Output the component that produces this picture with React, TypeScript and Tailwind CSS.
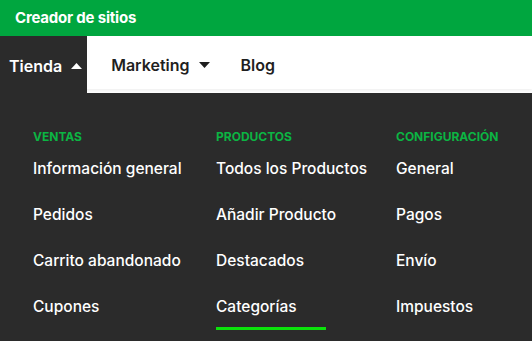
const columns = [
  { title: 'Ventas', items: ['Información general', 'Pedidos', 'Carrito abandonado', 'Cupones'] },
  { title: 'Productos', items: ['Todos los Productos', 'Añadir Producto', 'Destacados', 'Categorías'] },
  { title: 'Configuración', items: ['General', 'Pagos', 'Envío', 'Impuestos'] },
];

const Caret = ({ up }: { up?: boolean }) => (
  <svg width="11" height="6" viewBox="0 0 11 6" className="ml-[9px]">
    <path d={up ? 'M0 6 L5.5 0 L11 6 Z' : 'M0 0 L5.5 6 L11 0 Z'} fill="currentColor" />
  </svg>
);

export default function App() {
  return (
    <div className="flex h-[341px] w-[532px] flex-col overflow-hidden bg-white font-['Inter',sans-serif]">
      <div className="flex h-9 shrink-0 items-center bg-[#00a63f] px-[15px] text-[15px] font-bold tracking-[-0.2px] text-white">
        Creador de sitios
      </div>
      <div className="flex h-[53px] shrink-0 items-start shadow-[0_2px_3px_rgba(0,0,0,0.06)]">
        <button className="flex h-[57px] items-center bg-[#2b2b2b] pl-[9px] pr-[5px] pt-[2px] text-base font-semibold text-white">
          Tienda
          <Caret up />
        </button>
        <button className="ml-[24px] flex h-[55px] items-center pt-[2px] text-base font-semibold text-[#1f1f1f]">
          Marketing
          <Caret />
        </button>
        <button className="ml-[31px] flex h-[55px] items-center pt-[2px] text-base font-semibold text-[#1f1f1f]">
          Blog
        </button>
      </div>
      <div className="mt-1 flex flex-1 bg-[#2b2b2b] pl-[33px] pt-[37px]">
        {columns.map((col, ci) => (
          <div key={col.title} className={ci === 0 ? 'w-[183px]' : ci === 1 ? 'w-[180px]' : 'flex-1'}>
            <div className="text-[12px] font-bold uppercase leading-[14px] text-[#0bb543]">{col.title}</div>
            <ul className="mt-[14px] flex flex-col gap-[25px]">
              {col.items.map((item) => (
                <li key={item} className="relative text-[15.5px] font-medium leading-[21px] text-white">
                  {item}
                  {item === 'Categorías' && (
                    <span className="absolute left-0 top-[31px] h-[3px] w-[110px] bg-[#0be20b]" />
                  )}
                </li>
              ))}
            </ul>
          </div>
        ))}
      </div>
    </div>
  );
}
